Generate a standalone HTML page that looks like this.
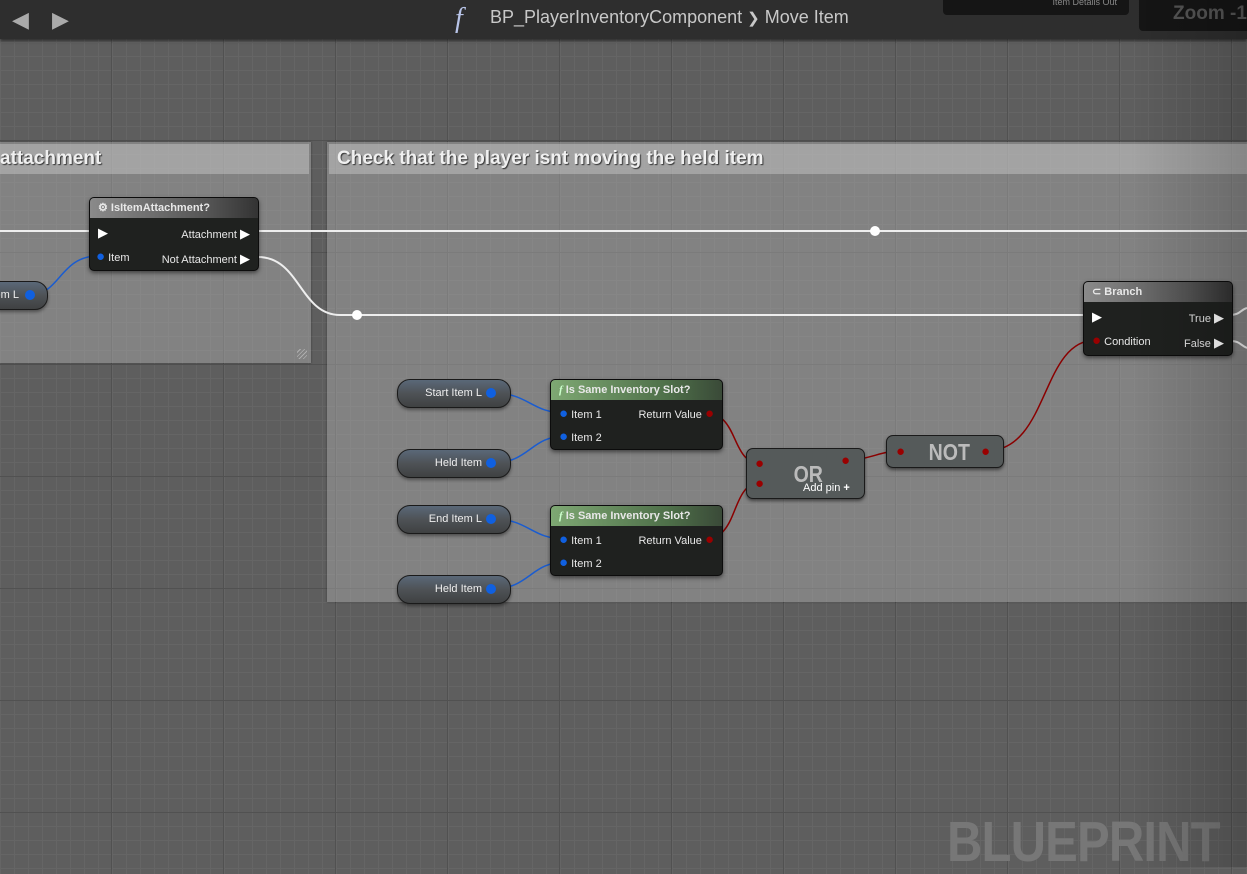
<!DOCTYPE html>
<html><head><style>
*{margin:0;padding:0;box-sizing:border-box}
body{width:1247px;height:867px;overflow:hidden;position:relative;font-family:"Liberation Sans",sans-serif;
background-color:#5e5e5e;
background-image:linear-gradient(#515151 1px,transparent 1px),linear-gradient(90deg,#515151 1px,transparent 1px),linear-gradient(#656565 1px,transparent 1px),linear-gradient(90deg,#656565 1px,transparent 1px);
background-size:112px 112px,112px 112px,14px 14px,14px 14px;background-position:-1px 28px,-1px 0,0 0,0 0}
.top{position:absolute;left:0;top:0;width:1247px;height:39px;background:#2e2e2e;box-shadow:0 2px 3px rgba(0,0,0,.5)}
.cm{position:absolute;background:rgba(175,175,175,.45);box-shadow:0 0 2px rgba(0,0,0,.4)}
.cm .h{position:absolute;left:2px;right:2px;top:2px;height:30px;background:rgba(205,205,205,.45);color:#f0f0f0;font-weight:bold;font-size:19px;line-height:30px;padding-left:8px;text-shadow:1px 1px 1px #333;white-space:nowrap;overflow:hidden}
.node{position:absolute;background:#1f211f;border:1px solid #0c0c0c;border-radius:5px;box-shadow:0 2px 4px rgba(0,0,0,.5);color:#e8e8e8;font-size:11px}
.node .t{height:20px;line-height:20px;border-radius:4px 4px 0 0;padding-left:8px;font-weight:bold;font-size:11px}
.gr{background:linear-gradient(90deg,#7ea873,#4d6e48 70%,#3a4a38)}
.gy{background:linear-gradient(90deg,#8a8a8a,#555 70%,#333)}
.lbl{position:absolute;white-space:nowrap}
.var{position:absolute;width:114px;height:29px;border-radius:13px;background:linear-gradient(180deg,#5a6878 0%,#4e5256 50%,#3f4142);border:1px solid #1a1a1a;box-shadow:0 2px 3px rgba(0,0,0,.4);color:#eee;font-size:11px;text-align:right;padding-right:28px;line-height:27px}
.pure{position:absolute;background:#555a5a;border:1px solid #1a1a1a;border-radius:7px;box-shadow:0 2px 3px rgba(0,0,0,.5);color:#bbb;font-weight:bold}
.ex{color:#fff;font-size:13px}
.bp{color:#1060e0;font-size:15px;line-height:11px}
.rp{color:#900;font-size:15px;line-height:11px}
</style></head><body>
<div class="cm" style="left:-10px;top:142px;width:321px;height:221px"><div class="h">attachment</div></div>
<div class="cm" style="left:327px;top:142px;width:930px;height:460px"><div class="h">Check that the player isnt moving the held item</div></div>
<div style="position:absolute;left:297px;top:349px;width:10px;height:10px;background:repeating-linear-gradient(135deg,transparent 0 2px,#ccc 2px 3px);opacity:.6"></div>

<svg width="1247" height="867" style="position:absolute;left:0;top:0" fill="none">
<path d="M0 231H90M258 231H1247" stroke="#eee" stroke-width="2"/>
<path d="M258 257C300 257 300 315 340 315H1090" stroke="#eee" stroke-width="2"/>
<path d="M1230 315C1240 315 1240 310 1247 308M1230 341C1240 341 1240 345 1247 348" stroke="#eee" stroke-width="2"/>
<circle cx="875" cy="231" r="5" fill="#fff"/><circle cx="357" cy="315" r="5" fill="#fff"/>
<path d="M30 295C60 295 60 256 98 256" stroke="#1a5cd0" stroke-width="1.5"/>
<path d="M492 393C530 393 530 413 566 413M492 463C530 463 530 436 566 436M492 519C530 519 530 539 566 539M492 589C530 589 530 562 566 562" stroke="#1a5cd0" stroke-width="1.5"/>
<path d="M705 413C740 413 730 463 760 463M705 539C740 539 730 483 760 483M846 460C870 460 880 451 900 451M986 451C1050 451 1040 340 1096 340" stroke="#8a0000" stroke-width="1.5"/>
</svg>

<div class="top"></div>
<div style="position:absolute;left:12px;top:7px;color:#aaa;font-size:22px">&#9664;</div>
<div style="position:absolute;left:52px;top:7px;color:#aaa;font-size:22px">&#9654;</div>
<div style="position:absolute;left:455px;top:3px;color:#b8c4e8;font-family:'Liberation Serif',serif;font-style:italic;font-size:28px">f</div>
<div style="position:absolute;left:490px;top:7px;color:#c8c8c8;font-size:18px">BP_PlayerInventoryComponent <span style="font-size:15px">&#x276F;</span> Move Item</div>
<div style="position:absolute;left:943px;top:-5px;width:186px;height:20px;background:#151515;border-radius:4px;color:#888;font-size:9px;text-align:right;padding:2px 12px 0 0">Item Details Out</div>
<div style="position:absolute;left:1139px;top:-5px;width:115px;height:36px;background:#151515;border-radius:4px;color:#555;font-size:19px;font-weight:bold;padding:8px 0 0 34px">Zoom -1</div>

<div class="var" style="left:-40px;top:281px;width:88px">em L</div>
<div class="node" style="left:89px;top:197px;width:170px;height:74px"><div class="t gy">&#9881; IsItemAttachment?</div>
<div class="lbl ex" style="left:8px;top:27px">&#9654;</div><div class="lbl" style="right:8px;top:28px">Attachment <span class="ex">&#9654;</span></div>
<div class="lbl" style="left:6px;top:53px"><span class="bp">&#9679;</span> Item</div><div class="lbl" style="right:8px;top:53px">Not Attachment <span class="ex">&#9654;</span></div></div>

<div class="var" style="left:397px;top:379px">Start Item L</div>
<div class="var" style="left:397px;top:449px">Held Item</div>
<div class="var" style="left:397px;top:505px">End Item L</div>
<div class="var" style="left:397px;top:575px">Held Item</div>
<svg width="1247" height="867" style="position:absolute;left:0;top:0"><g fill="#1060e0"><circle cx="30" cy="295" r="5"/><circle cx="491" cy="393" r="5"/><circle cx="491" cy="463" r="5"/><circle cx="491" cy="519" r="5"/><circle cx="491" cy="589" r="5"/></g></svg>

<div class="node" style="left:550px;top:379px;width:173px;height:71px"><div class="t gr"><i style="font-family:'Liberation Serif';color:#cfc">f</i> Is Same Inventory Slot?</div>
<div class="lbl" style="left:8px;top:28px"><span class="bp">&#9679;</span> Item 1</div><div class="lbl" style="right:8px;top:28px">Return Value <span class="rp">&#9679;</span></div>
<div class="lbl" style="left:8px;top:51px"><span class="bp">&#9679;</span> Item 2</div></div>
<div class="node" style="left:550px;top:505px;width:173px;height:71px"><div class="t gr"><i style="font-family:'Liberation Serif';color:#cfc">f</i> Is Same Inventory Slot?</div>
<div class="lbl" style="left:8px;top:28px"><span class="bp">&#9679;</span> Item 1</div><div class="lbl" style="right:8px;top:28px">Return Value <span class="rp">&#9679;</span></div>
<div class="lbl" style="left:8px;top:51px"><span class="bp">&#9679;</span> Item 2</div></div>

<div class="pure" style="left:746px;top:448px;width:119px;height:51px"><div class="lbl" style="left:44px;top:12px;font-size:23px;transform:scaleX(.85)">OR</div>
<div class="lbl" style="left:56px;top:33px;font-size:11px;color:#fff;font-weight:normal">Add pin <b>+</b></div>
<div class="lbl rp" style="left:8px;top:9px">&#9679;</div><div class="lbl rp" style="left:8px;top:29px">&#9679;</div><div class="lbl rp" style="left:94px;top:6px">&#9679;</div></div>
<div class="pure" style="left:886px;top:435px;width:118px;height:33px"><div class="lbl" style="left:38px;top:3px;font-size:23px;transform:scaleX(.85)">NOT</div>
<div class="lbl rp" style="left:9px;top:10px">&#9679;</div><div class="lbl rp" style="left:94px;top:10px">&#9679;</div></div>

<div class="node" style="left:1083px;top:281px;width:150px;height:75px"><div class="t gy">&#8834; Branch</div>
<div class="lbl ex" style="left:8px;top:27px">&#9654;</div><div class="lbl" style="right:8px;top:28px">True <span class="ex">&#9654;</span></div>
<div class="lbl" style="left:8px;top:53px"><span class="rp">&#9679;</span> Condition</div><div class="lbl" style="right:8px;top:53px">False <span class="ex">&#9654;</span></div></div>

<div style="position:absolute;left:947px;top:812px;color:#777;font-size:57px;font-weight:bold;letter-spacing:-1px;line-height:60px;transform:scaleX(.86);transform-origin:0 0">BLUEPRINT</div>
<div style="position:absolute;left:1130px;top:0;width:117px;height:867px;background:linear-gradient(90deg,transparent,rgba(0,0,0,.18))"></div>
</body></html>
